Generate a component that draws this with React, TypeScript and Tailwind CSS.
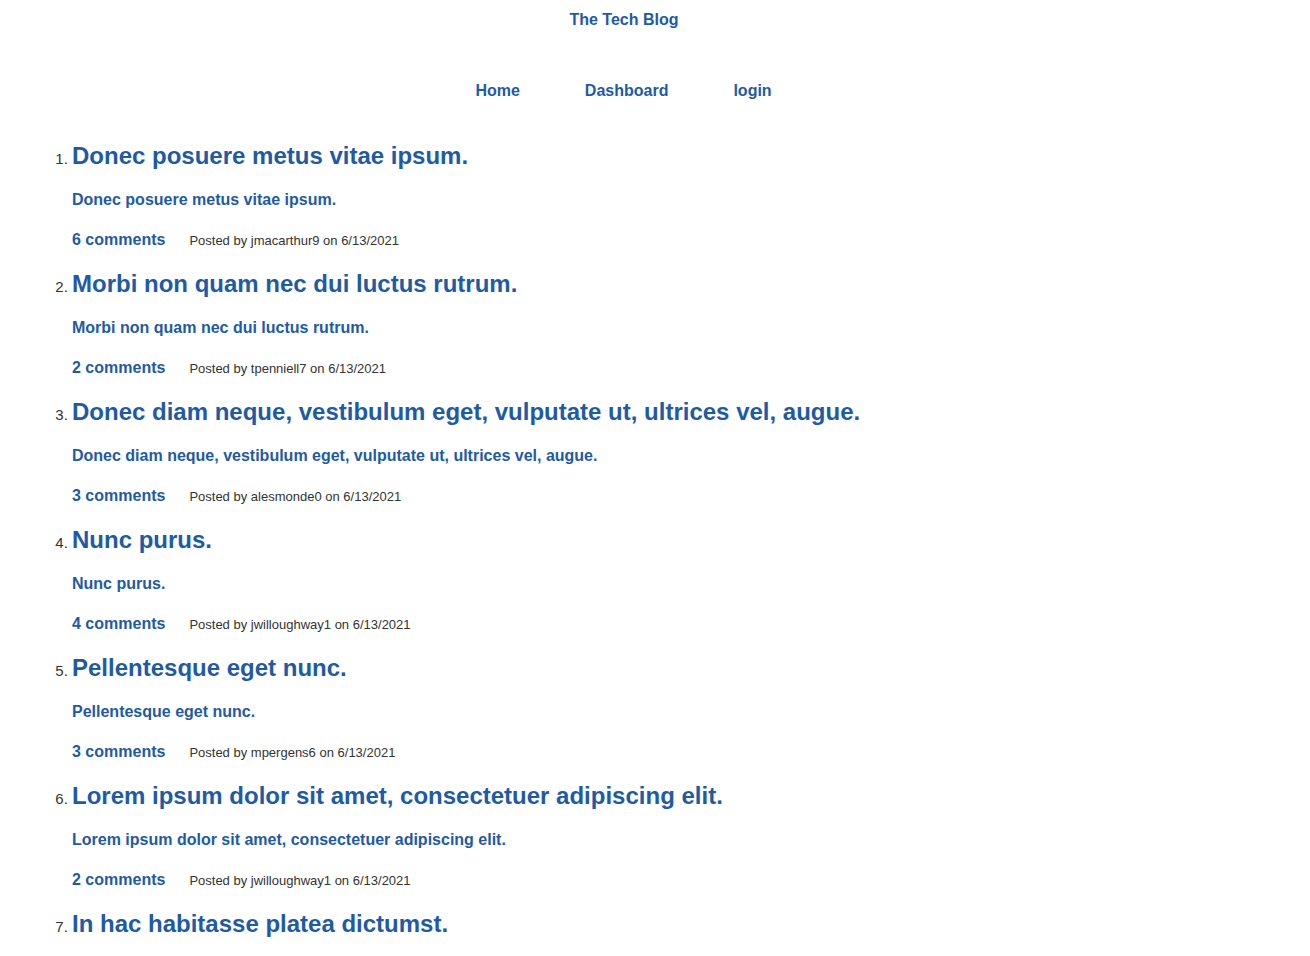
import React from 'react';

interface Post {
  title: string;
  comments: number;
  author: string;
  date: string;
}

const posts: Post[] = [
  { title: 'Donec posuere metus vitae ipsum.', comments: 6, author: 'jmacarthur9', date: '6/13/2021' },
  { title: 'Morbi non quam nec dui luctus rutrum.', comments: 2, author: 'tpenniell7', date: '6/13/2021' },
  {
    title: 'Donec diam neque, vestibulum eget, vulputate ut, ultrices vel, augue.',
    comments: 3,
    author: 'alesmonde0',
    date: '6/13/2021',
  },
  { title: 'Nunc purus.', comments: 4, author: 'jwilloughway1', date: '6/13/2021' },
  { title: 'Pellentesque eget nunc.', comments: 3, author: 'mpergens6', date: '6/13/2021' },
  {
    title: 'Lorem ipsum dolor sit amet, consectetuer adipiscing elit.',
    comments: 2,
    author: 'jwilloughway1',
    date: '6/13/2021',
  },
  { title: 'In hac habitasse platea dictumst.', comments: 5, author: 'jmacarthur9', date: '6/13/2021' },
];

const App = () => {
  return (
    <div className="min-h-screen bg-white font-['Liberation_Sans',Arial,sans-serif] text-[#1f5aa6]">
      <header className="flex flex-col items-center pt-[11px] pr-[62px]">
        <h1 className="text-[16px] leading-[18px] font-bold">
          <a href="#">The Tech Blog</a>
        </h1>
        <nav className="flex mt-[53px] ml-[-1px] text-[16px] leading-[18px] font-bold">
          <a href="#" className="ml-[32px] mr-[33px]">
            Home
          </a>
          <a href="#" className="mx-[32px]">
            Dashboard
          </a>
          <a href="#" className="ml-[33px] mr-[32px]">
            login
          </a>
        </nav>
      </header>
      <ol className="list-decimal pl-[72px] mt-[42px] text-[15px] marker:text-[#333]">
        {posts.map((post, i) => (
          <li key={i} className="mb-[20px]">
            <h2 className="text-[24px] leading-[28px] font-bold">
              <a href="#">{post.title}</a>
            </h2>
            <p className="mt-[21px] text-[16px] leading-[18px] font-bold">{post.title}</p>
            <div className="flex items-baseline mt-[22px] leading-[18px]">
              <a href="#" className="text-[16px] font-bold">
                {post.comments} comments
              </a>
              <span className="ml-[24px] text-[13px] text-[#333]">
                Posted by {post.author} on {post.date}
              </span>
            </div>
          </li>
        ))}
      </ol>
    </div>
  );
};

export default App;
